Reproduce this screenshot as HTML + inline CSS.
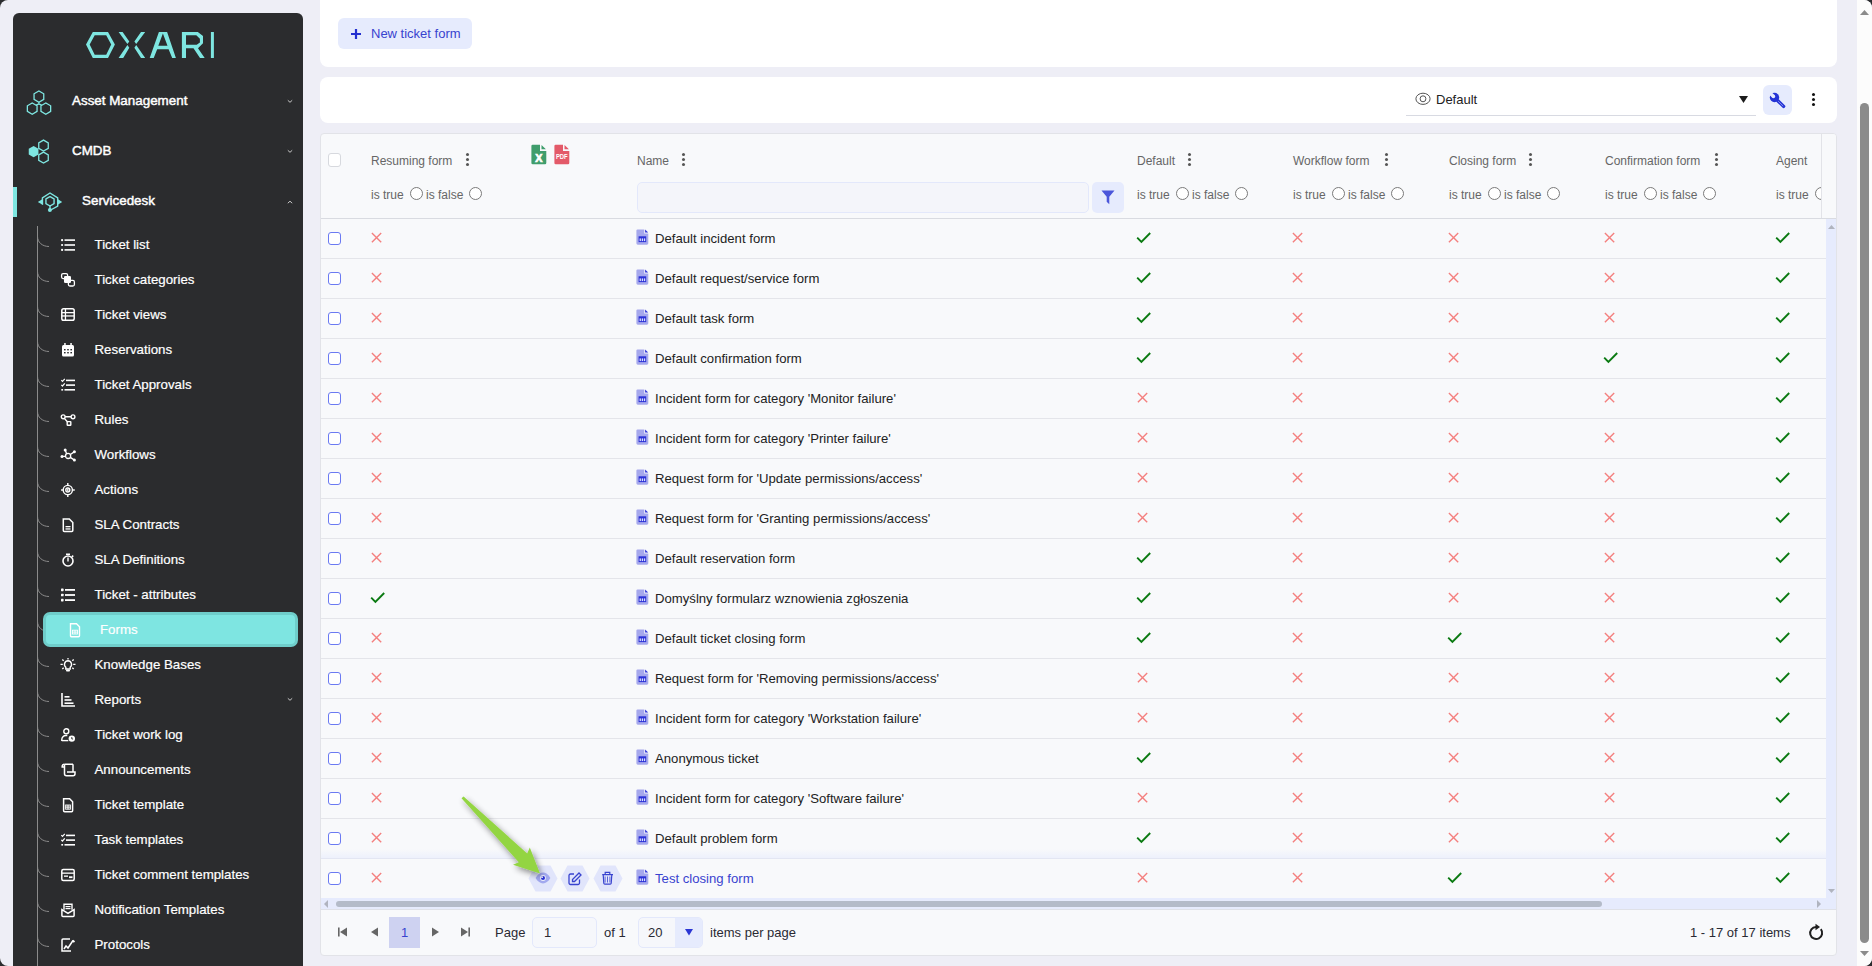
<!DOCTYPE html>
<html><head><meta charset="utf-8"><title>Forms</title>
<style>
*{box-sizing:border-box}
html,body{margin:0;padding:0}
body{width:1872px;height:966px;overflow:hidden;background:#2b2c2e;font-family:"Liberation Sans",sans-serif;position:relative}
#app{position:absolute;left:0;top:0;width:1872px;height:966px;background:#eeeef6;border-radius:8px;overflow:hidden}
.abs{position:absolute}
.ic{position:absolute;display:block;overflow:visible}
.sb{position:absolute;left:13px;top:13px;width:290px;height:970px;background:#2b2c2e;border-radius:6px}
.top{position:absolute;left:0;color:#fff;font-size:13.4px;-webkit-text-stroke:0.45px #fff;white-space:nowrap}
.si{position:absolute;left:81.5px;-webkit-text-stroke:0.2px #fff;color:#fff;font-size:13.3px;white-space:nowrap;line-height:16px}
.card{position:absolute;background:#fff;border-radius:8px}
.hd{position:absolute;color:#666;font-size:12px;white-space:nowrap;line-height:14px}
.cell{position:absolute;color:#222;font-size:13.15px;white-space:nowrap;line-height:16px}
.radio{position:absolute;width:13px;height:13px;border:1px solid #7a7a7a;border-radius:50%;background:#fff}
.kb{position:absolute;width:3px}
.kb i{display:block;width:3px;height:3px;border-radius:50%;background:#555;margin-bottom:2.2px}
.rowl{position:absolute;left:0;width:1505px;height:1px;background:#e4e5ea}
.cb{position:absolute;width:13px;height:13px;border:1.3px solid #6b7af2;border-radius:3px;background:#fff}
.ft{position:absolute;color:#2a2a33;font-size:13px;white-space:nowrap;line-height:16px}
</style></head><body><div id="app">

<div class="sb">
<svg class="ic" style="left:-13px;top:-13px" width="240" height="80" viewBox="0 0 240 80"><g fill="#7ee6e1" fill-rule="evenodd">
<path d="M86 44.6L92.8 32L108 32L114.9 44.6L108 57.9L92.8 57.9Z M89.7 44.6L94.7 35.2L106.2 35.2L111.2 44.6L106.2 54.7L94.7 54.7Z"/>
<path d="M118.6 31.9L122.6 31.9L129.3 41.6L127.4 44Z M127.4 45.1L129.3 47.7L123.2 57.9L118.6 57.9Z M141 31.9L145.2 31.9L136.2 44L134.4 41.6Z M136.2 45.1L145.2 57.9L141 57.9L134.4 47.7Z"/>
<path d="M149.7 57.9L158.9 31.9L167.1 31.9L175.9 57.9L172.2 57.9L168.6 49.3L157.2 49.3L153.7 57.9Z M158.3 45.8L162.9 33.5L167.5 45.8Z"/>
<path d="M181.9 57.9L181.9 31.9L197.8 31.9L203 36L203 43.3L198 48.2L204.7 57.9L200 57.9L193.5 48.2L186 48.2L186 57.9Z M186 35.3L196.3 35.3L199.9 38.8L199.9 42.4L196.7 44.8L186 44.8Z"/>
<path d="M210.9 31.9L213.9 31.9L213.9 57.9L210.9 57.9Z"/>
</g></svg>
<svg class="ic" style="left:12px;top:77px" width="28" height="26" viewBox="0 0 28 26"><g fill="none" stroke="#7ee6e1" stroke-width="1.3"><path d="M18.75 9.40 L13.90 12.20 L9.05 9.40 L9.05 3.80 L13.90 1.00 L18.75 3.80Z"/><path d="M12.05 21.40 L7.20 24.20 L2.35 21.40 L2.35 15.80 L7.20 13.00 L12.05 15.80Z"/><path d="M25.65 21.40 L20.80 24.20 L15.95 21.40 L15.95 15.80 L20.80 13.00 L25.65 15.80Z"/><path d="M13.9 12.2v1.6M10.8 15.4l3.1-1.6 3.1 1.6"/></g></svg>
<svg class="ic" style="left:14px;top:126px" width="26" height="26" viewBox="0 0 26 26"><g fill="none" stroke="#7ee6e1" stroke-width="1.3"><path d="M21.26 9.35 L16.50 12.10 L11.74 9.35 L11.74 3.85 L16.50 1.10 L21.26 3.85Z"/><path d="M21.26 21.35 L16.50 24.10 L11.74 21.35 L11.74 15.85 L16.50 13.10 L21.26 15.85Z"/></g><path fill="#7ee6e1" d="M11.45 15.40 L6.60 18.20 L1.75 15.40 L1.75 9.80 L6.60 7.00 L11.45 9.80Z"/></svg>
<svg class="ic" style="left:24px;top:178px" width="26" height="22" viewBox="0 0 26 22"><g fill="none" stroke="#7ee6e1" stroke-width="1.4" stroke-linejoin="round"><path d="M5.4 13.6V6.8L13 2l7.7 4.8v8.4l-7 3.8"/><path d="M17.07 12.65 L13.00 15.00 L8.93 12.65 L8.93 7.95 L13.00 5.60 L17.07 7.95Z"/><path d="M13 15v3"/></g><path fill="#7ee6e1" d="M0.8 10.9L6.1 7.8v6.2zM25.2 10.9L20.3 7.8v6.2z"/><circle cx="12.9" cy="18.9" r="2" fill="#7ee6e1"/></svg>
<div class="top" style="left:59px;top:80px;line-height:16px">Asset Management</div>
<div class="top" style="left:59px;top:130px;line-height:16px">CMDB</div>
<div class="top" style="left:69px;top:180px;line-height:16px">Servicedesk</div>
<div class="abs" style="left:0;top:174px;width:4px;height:30px;background:#7ee6e1"></div>
<svg class="ic" style="left:274px;top:86px" width="6" height="5" viewBox="0 0 6 5"><path d="M0.8 1.3L3 3.3 5.2 1.3" fill="none" stroke="#c8c8c8" stroke-width="1"/></svg>
<svg class="ic" style="left:274px;top:136px" width="6" height="5" viewBox="0 0 6 5"><path d="M0.8 1.3L3 3.3 5.2 1.3" fill="none" stroke="#c8c8c8" stroke-width="1"/></svg>
<svg class="ic" style="left:274px;top:187px" width="6" height="5" viewBox="0 0 6 5"><path d="M0.8 3.2L3 1.2l2.2 2" fill="none" stroke="#c8c8c8" stroke-width="1"/></svg>
<svg class="ic" style="left:274px;top:684px" width="6" height="5" viewBox="0 0 6 5"><path d="M0.8 1.3L3 3.3 5.2 1.3" fill="none" stroke="#c8c8c8" stroke-width="1"/></svg>
<div class="abs" style="left:24px;top:213px;width:1px;height:760px;background:#8b8b8b"></div>
<svg class="ic" style="left:24px;top:223px" width="14" height="12" viewBox="0 0 14 12"><path d="M0.5 0.5C0.5 6 5 10.5 12 10.5" fill="none" stroke="#8b8b8b" stroke-width="1"/></svg>
<svg class="ic" style="left:48px;top:225px" width="14" height="14" viewBox="0 0 14 14" fill="#fff"><rect x="0" y="1" width="2.2" height="2.2" rx="1"/><rect x="0" y="5.9" width="2.2" height="2.2" rx="1"/><rect x="0" y="10.8" width="2.2" height="2.2" rx="1"/><rect x="3.5" y="1.3" width="10.5" height="1.6"/><rect x="3.5" y="6.2" width="10.5" height="1.6"/><rect x="3.5" y="11.1" width="10.5" height="1.6"/></svg>
<div class="si" style="top:224px">Ticket list</div>
<svg class="ic" style="left:24px;top:258px" width="14" height="12" viewBox="0 0 14 12"><path d="M0.5 0.5C0.5 6 5 10.5 12 10.5" fill="none" stroke="#8b8b8b" stroke-width="1"/></svg>
<svg class="ic" style="left:48px;top:260px" width="14" height="14" viewBox="0 0 14 14" fill="#fff"><rect x="0.6" y="0.6" width="6" height="5" rx="1.5" fill="none" stroke="#fff" stroke-width="1.3"/><rect x="3" y="3" width="7" height="7" rx="1.3"/><rect x="7.4" y="7.4" width="6" height="5.6" rx="1.5" fill="none" stroke="#fff" stroke-width="1.3"/></svg>
<div class="si" style="top:259px">Ticket categories</div>
<svg class="ic" style="left:24px;top:293px" width="14" height="12" viewBox="0 0 14 12"><path d="M0.5 0.5C0.5 6 5 10.5 12 10.5" fill="none" stroke="#8b8b8b" stroke-width="1"/></svg>
<svg class="ic" style="left:48px;top:295px" width="14" height="14" viewBox="0 0 14 14" fill="#fff"><rect x="0.8" y="0.8" width="12.4" height="11.4" rx="1.8" fill="none" stroke="#fff" stroke-width="1.5"/><rect x="1" y="4" width="12" height="1.3"/><rect x="1" y="7.3" width="12" height="1.3"/><rect x="3.8" y="1" width="1.3" height="11"/></svg>
<div class="si" style="top:294px">Ticket views</div>
<svg class="ic" style="left:24px;top:328px" width="14" height="12" viewBox="0 0 14 12"><path d="M0.5 0.5C0.5 6 5 10.5 12 10.5" fill="none" stroke="#8b8b8b" stroke-width="1"/></svg>
<svg class="ic" style="left:48px;top:330px" width="14" height="14" viewBox="0 0 14 14" fill="#fff"><rect x="1" y="2" width="12" height="11.5" rx="1.5"/><rect x="3.2" y="0" width="1.5" height="3"/><rect x="9.3" y="0" width="1.5" height="3"/><g fill="#2b2c2e"><rect x="3" y="6" width="1.6" height="1.4"/><rect x="6.2" y="6" width="1.6" height="1.4"/><rect x="9.4" y="6" width="1.6" height="1.4"/><rect x="3" y="9" width="1.6" height="1.4"/><rect x="6.2" y="9" width="1.6" height="1.4"/><rect x="9.4" y="9" width="1.6" height="1.4"/></g></svg>
<div class="si" style="top:329px">Reservations</div>
<svg class="ic" style="left:24px;top:363px" width="14" height="12" viewBox="0 0 14 12"><path d="M0.5 0.5C0.5 6 5 10.5 12 10.5" fill="none" stroke="#8b8b8b" stroke-width="1"/></svg>
<svg class="ic" style="left:48px;top:365px" width="14" height="14" viewBox="0 0 14 14" fill="#fff"><path d="M0.3 2.2l1.2 1.2 2.3-2.6M0.3 6.8l1.2 1.2 2.3-2.6" fill="none" stroke="#fff" stroke-width="1.2"/><rect x="0.3" y="11" width="1.8" height="1.6"/><rect x="5" y="1.6" width="9" height="1.6"/><rect x="5" y="6.3" width="9" height="1.6"/><rect x="3.5" y="11" width="10.5" height="1.6"/></svg>
<div class="si" style="top:364px">Ticket Approvals</div>
<svg class="ic" style="left:24px;top:398px" width="14" height="12" viewBox="0 0 14 12"><path d="M0.5 0.5C0.5 6 5 10.5 12 10.5" fill="none" stroke="#8b8b8b" stroke-width="1"/></svg>
<svg class="ic" style="left:48px;top:400px" width="14" height="14" viewBox="0 0 14 14" fill="#fff"><g fill="none" stroke="#fff" stroke-width="1.4"><circle cx="2.2" cy="3.8" r="1.9"/><circle cx="12" cy="3.8" r="1.9"/><rect x="6.2" y="8.6" width="3.6" height="3.6" rx="0.5"/><path d="M4.1 3.8h6M3.3 5.4l3.3 3.6"/></g></svg>
<div class="si" style="top:399px">Rules</div>
<svg class="ic" style="left:24px;top:433px" width="14" height="12" viewBox="0 0 14 12"><path d="M0.5 0.5C0.5 6 5 10.5 12 10.5" fill="none" stroke="#8b8b8b" stroke-width="1"/></svg>
<svg class="ic" style="left:48px;top:435px" width="14" height="14" viewBox="0 0 14 14" fill="#fff"><g fill="none" stroke="#fff" stroke-width="1.3"><circle cx="7.1" cy="7.9" r="2.6"/><path d="M1.5 8.3h3M5.6 5.8L4.3 2.2M9.4 6.5l3.8-2.6M9.3 9.4l3.8 2.5"/></g><circle cx="1" cy="8.4" r="1.5"/><circle cx="4.2" cy="1.9" r="1.5"/><circle cx="13.4" cy="3.7" r="1.5"/><circle cx="13.4" cy="12.1" r="1.5"/></svg>
<div class="si" style="top:434px">Workflows</div>
<svg class="ic" style="left:24px;top:468px" width="14" height="12" viewBox="0 0 14 12"><path d="M0.5 0.5C0.5 6 5 10.5 12 10.5" fill="none" stroke="#8b8b8b" stroke-width="1"/></svg>
<svg class="ic" style="left:48px;top:470px" width="14" height="14" viewBox="0 0 14 14" fill="#fff"><g fill="none" stroke="#fff" stroke-width="1.4"><circle cx="6.8" cy="7" r="4.6"/><circle cx="6.8" cy="7" r="2"/></g><circle cx="6.8" cy="7" r="0.9"/><rect x="6.1" y="0" width="1.4" height="2.2"/><rect x="6.1" y="11.8" width="1.4" height="2.2"/><rect x="0" y="6.3" width="2.2" height="1.4"/><rect x="11.6" y="6.3" width="2.2" height="1.4"/></svg>
<div class="si" style="top:469px">Actions</div>
<svg class="ic" style="left:24px;top:503px" width="14" height="12" viewBox="0 0 14 12"><path d="M0.5 0.5C0.5 6 5 10.5 12 10.5" fill="none" stroke="#8b8b8b" stroke-width="1"/></svg>
<svg class="ic" style="left:48px;top:505px" width="14" height="14" viewBox="0 0 14 14" fill="#fff"><path d="M2.3 1h6l3.5 3.5v8a1 1 0 0 1-1 1H3.3a1 1 0 0 1-1-1z" fill="none" stroke="#fff" stroke-width="1.5"/><rect x="4.5" y="8" width="5" height="1.3"/><rect x="4.5" y="10.3" width="5" height="1.3"/></svg>
<div class="si" style="top:504px">SLA Contracts</div>
<svg class="ic" style="left:24px;top:538px" width="14" height="12" viewBox="0 0 14 12"><path d="M0.5 0.5C0.5 6 5 10.5 12 10.5" fill="none" stroke="#8b8b8b" stroke-width="1"/></svg>
<svg class="ic" style="left:48px;top:540px" width="14" height="14" viewBox="0 0 14 14" fill="#fff"><circle cx="7" cy="8" r="5" fill="none" stroke="#fff" stroke-width="1.6"/><rect x="5" y="0.5" width="4" height="1.5"/><rect x="6.3" y="4.5" width="1.4" height="4"/><rect x="10.8" y="2.3" width="1.5" height="2" transform="rotate(45 11.5 3.3)"/></svg>
<div class="si" style="top:539px">SLA Definitions</div>
<svg class="ic" style="left:24px;top:573px" width="14" height="12" viewBox="0 0 14 12"><path d="M0.5 0.5C0.5 6 5 10.5 12 10.5" fill="none" stroke="#8b8b8b" stroke-width="1"/></svg>
<svg class="ic" style="left:48px;top:575px" width="14" height="14" viewBox="0 0 14 14" fill="#fff"><rect x="0" y="0.6" width="2.6" height="2.6" rx="0.6"/><rect x="0" y="5.7" width="2.6" height="2.6" rx="0.6"/><rect x="0" y="10.8" width="2.6" height="2.6" rx="0.6"/><rect x="4" y="1" width="10" height="1.8"/><rect x="4" y="6.1" width="10" height="1.8"/><rect x="4" y="11.2" width="10" height="1.8"/></svg>
<div class="si" style="top:574px">Ticket - attributes</div>
<svg class="ic" style="left:24px;top:608px" width="14" height="12" viewBox="0 0 14 12"><path d="M0.5 0.5C0.5 6 5 10.5 12 10.5" fill="none" stroke="#8b8b8b" stroke-width="1"/></svg>
<div class="abs" style="left:30px;top:599px;width:255px;height:35px;background:#7ee5e1;border:3px solid #6fcdca;border-radius:7px"></div>
<svg class="ic" style="left:55px;top:610px" width="14" height="15" viewBox="0 0 14 15"><path d="M2.5 0.8h6l3 3v9a1 1 0 0 1-1 1H3.5a1 1 0 0 1-1-1z" fill="none" stroke="#fff" stroke-width="1.4"/><g fill="none" stroke="#fff" stroke-width="0.9"><rect x="4.5" y="7.2" width="5" height="3.8"/><path d="M7 7.2v3.8M4.5 9.1h5"/></g></svg>
<div class="si" style="left:87px;top:609px">Forms</div>
<svg class="ic" style="left:24px;top:643px" width="14" height="12" viewBox="0 0 14 12"><path d="M0.5 0.5C0.5 6 5 10.5 12 10.5" fill="none" stroke="#8b8b8b" stroke-width="1"/></svg>
<svg class="ic" style="left:48px;top:645px" width="14" height="14" viewBox="0 0 14 14" fill="#fff"><path d="M7 2.8a3.6 3.6 0 0 0-2.2 6.4v1.8h4.4V9.2A3.6 3.6 0 0 0 7 2.8z" fill="none" stroke="#fff" stroke-width="1.4"/><rect x="5" y="11.6" width="4" height="1.9" rx="0.9"/><g stroke="#fff" stroke-width="1.3"><path d="M7 0v1.5M-0.5 6.3h2.3M12.2 6.3h2.3M1.3 1.5l1.4 1.3M12.7 1.5l-1.4 1.3M1.3 11l1.4-1.3M12.7 11l-1.4-1.3"/></g></svg>
<div class="si" style="top:644px">Knowledge Bases</div>
<svg class="ic" style="left:24px;top:678px" width="14" height="12" viewBox="0 0 14 12"><path d="M0.5 0.5C0.5 6 5 10.5 12 10.5" fill="none" stroke="#8b8b8b" stroke-width="1"/></svg>
<svg class="ic" style="left:48px;top:680px" width="14" height="14" viewBox="0 0 14 14" fill="#fff"><path d="M1 0v13h13" fill="none" stroke="#fff" stroke-width="1.6"/><rect x="3.5" y="3" width="5" height="1.6"/><rect x="3.5" y="6.2" width="7" height="1.6"/><rect x="3.5" y="9.4" width="9" height="1.6"/></svg>
<div class="si" style="top:679px">Reports</div>
<svg class="ic" style="left:24px;top:713px" width="14" height="12" viewBox="0 0 14 12"><path d="M0.5 0.5C0.5 6 5 10.5 12 10.5" fill="none" stroke="#8b8b8b" stroke-width="1"/></svg>
<svg class="ic" style="left:48px;top:715px" width="14" height="14" viewBox="0 0 14 14" fill="#fff"><circle cx="5.3" cy="3.2" r="2.5" fill="none" stroke="#fff" stroke-width="1.4"/><path d="M0.8 13v-1.5a4 4 0 0 1 4-4h1.5" fill="none" stroke="#fff" stroke-width="1.4"/><path d="M0.8 12.6h6.5" stroke="#fff" stroke-width="1.4"/><circle cx="10.8" cy="10.6" r="3.2"/><path d="M10.8 9v2h1.3" stroke="#2b2c2e" stroke-width="0.9" fill="none"/></svg>
<div class="si" style="top:714px">Ticket work log</div>
<svg class="ic" style="left:24px;top:748px" width="14" height="12" viewBox="0 0 14 12"><path d="M0.5 0.5C0.5 6 5 10.5 12 10.5" fill="none" stroke="#8b8b8b" stroke-width="1"/></svg>
<svg class="ic" style="left:48px;top:750px" width="14" height="14" viewBox="0 0 14 14" fill="#fff"><path d="M3.5 1.2h8.5M3.2 1.2a2 2 0 0 0-2 2v0.8h2.3M3.5 1.2v9.6a2 2 0 0 0 2 2h6.5a2 2 0 0 0 2-2V9h-8" fill="none" stroke="#fff" stroke-width="1.5"/><path d="M12 1.2v7.8" stroke="#fff" stroke-width="1.5"/></svg>
<div class="si" style="top:749px">Announcements</div>
<svg class="ic" style="left:24px;top:783px" width="14" height="12" viewBox="0 0 14 12"><path d="M0.5 0.5C0.5 6 5 10.5 12 10.5" fill="none" stroke="#8b8b8b" stroke-width="1"/></svg>
<svg class="ic" style="left:48px;top:785px" width="14" height="14" viewBox="0 0 14 14" fill="#fff"><path d="M2.6 0.8h6l3 3v9a1 1 0 0 1-1 1H3.6a1 1 0 0 1-1-1z" fill="none" stroke="#fff" stroke-width="1.5"/><g fill="none" stroke="#fff" stroke-width="0.9"><rect x="4.6" y="7" width="4.8" height="4.2"/><path d="M6.2 7v4.2M7.8 7v4.2M4.6 9.1h4.8"/></g></svg>
<div class="si" style="top:784px">Ticket template</div>
<svg class="ic" style="left:24px;top:818px" width="14" height="12" viewBox="0 0 14 12"><path d="M0.5 0.5C0.5 6 5 10.5 12 10.5" fill="none" stroke="#8b8b8b" stroke-width="1"/></svg>
<svg class="ic" style="left:48px;top:820px" width="14" height="14" viewBox="0 0 14 14" fill="#fff"><path d="M0.3 2.2l1.2 1.2 2.3-2.6M0.3 6.8l1.2 1.2 2.3-2.6" fill="none" stroke="#fff" stroke-width="1.2"/><rect x="0.3" y="11" width="1.8" height="1.6"/><rect x="5" y="1.6" width="9" height="1.6"/><rect x="5" y="6.3" width="9" height="1.6"/><rect x="3.5" y="11" width="10.5" height="1.6"/></svg>
<div class="si" style="top:819px">Task templates</div>
<svg class="ic" style="left:24px;top:853px" width="14" height="12" viewBox="0 0 14 12"><path d="M0.5 0.5C0.5 6 5 10.5 12 10.5" fill="none" stroke="#8b8b8b" stroke-width="1"/></svg>
<svg class="ic" style="left:48px;top:855px" width="14" height="14" viewBox="0 0 14 14" fill="#fff"><rect x="0.8" y="1.5" width="12.4" height="11" rx="1.5" fill="none" stroke="#fff" stroke-width="1.5"/><rect x="1" y="4.5" width="12" height="1.3"/><rect x="3" y="7.5" width="4" height="1.3"/><rect x="8" y="8.3" width="3.5" height="1.8"/></svg>
<div class="si" style="top:854px">Ticket comment templates</div>
<svg class="ic" style="left:24px;top:888px" width="14" height="12" viewBox="0 0 14 12"><path d="M0.5 0.5C0.5 6 5 10.5 12 10.5" fill="none" stroke="#8b8b8b" stroke-width="1"/></svg>
<svg class="ic" style="left:48px;top:890px" width="14" height="14" viewBox="0 0 14 14" fill="#fff"><path d="M0.9 6.5v6a1 1 0 0 0 1 1h10.2a1 1 0 0 0 1-1v-6l-6.1 3.8z" fill="none" stroke="#fff" stroke-width="1.5"/><path d="M3 6.8V1.2h8v5.6" fill="none" stroke="#fff" stroke-width="1.4"/><rect x="4.5" y="3" width="5" height="1.2"/><rect x="4.5" y="5" width="5" height="1.2"/></svg>
<div class="si" style="top:889px">Notification Templates</div>
<svg class="ic" style="left:24px;top:923px" width="14" height="12" viewBox="0 0 14 12"><path d="M0.5 0.5C0.5 6 5 10.5 12 10.5" fill="none" stroke="#8b8b8b" stroke-width="1"/></svg>
<svg class="ic" style="left:48px;top:925px" width="14" height="14" viewBox="0 0 14 14" fill="#fff"><path d="M9 1H2a1 1 0 0 0-1 1v11h9" fill="none" stroke="#fff" stroke-width="1.5"/><path d="M3 11l2-3 2 2 5-7.5" fill="none" stroke="#fff" stroke-width="1.5"/><path d="M11.5 2.5l2 1.5" stroke="#fff" stroke-width="2"/></svg>
<div class="si" style="top:924px">Protocols</div>
</div>
<div class="card" style="left:320px;top:-10px;width:1517px;height:77px"></div>
<div class="abs" style="left:338px;top:18px;width:134px;height:31px;background:#e6ebfd;border-radius:6px"></div>
<svg class="ic" style="left:351px;top:29px" width="10" height="10" viewBox="0 0 10 10"><path d="M5 0v10M0 5h10" stroke="#2430d0" stroke-width="2.2"/></svg>
<div class="abs" style="left:371px;top:26px;color:#3843cf;font-size:13px;line-height:16px;white-space:nowrap">New ticket form</div>
<div class="card" style="left:320px;top:77px;width:1517px;height:46px"></div>
<svg class="ic" style="left:1415px;top:92px" width="16" height="14" viewBox="0 0 16 14"><ellipse cx="8" cy="6.8" rx="7.1" ry="5.6" fill="none" stroke="#555" stroke-width="1"/><ellipse cx="8" cy="6.8" rx="2.9" ry="3" fill="none" stroke="#555" stroke-width="1"/></svg>
<div class="abs" style="left:1436px;top:92px;color:#222;font-size:13px;line-height:16px">Default</div>
<div class="abs" style="left:1406px;top:115px;width:350px;height:1px;background:#d8dae2"></div>
<svg class="ic" style="left:1739px;top:96px" width="9" height="7" viewBox="0 0 9 7"><path d="M0 0h9L4.5 7z" fill="#1c1c1c"/></svg>
<div class="abs" style="left:1763px;top:85px;width:29px;height:30px;background:#e6ebfd;border-radius:6px"></div>
<svg class="ic" style="left:1762px;top:85px" width="30" height="30" viewBox="0 0 30 30"><defs><mask id="wm"><rect width="30" height="30" fill="#fff"/><circle cx="11.4" cy="11.4" r="1.8" fill="#000"/><path d="M11.4 11.4L6.5 6.5" stroke="#000" stroke-width="3.4"/></mask></defs><circle cx="12.5" cy="12.5" r="4.7" fill="#2433d6" mask="url(#wm)"/><path d="M15.8 15.8l5.8 5.6" stroke="#2433d6" stroke-width="3.4" stroke-linecap="round"/><path d="M16.2 16.2l5 4.9" stroke="#8f98ee" stroke-width="0.9"/></svg>
<div class="kb" style="left:1812px;top:93px"><i style="background:#111"></i><i style="background:#111"></i><i style="background:#111"></i></div>
<div class="abs" style="left:320px;top:133px;width:1517px;height:823px;background:#f8f9fb;border:1px solid #e2e3e8;border-radius:4px;overflow:hidden"><div class="abs" style="left:1500px;top:0;width:1px;height:84px;background:#e2e3e8"></div><div class="abs" style="left:0;top:84px;width:1517px;height:1px;background:#d9dbe1"></div><div class="abs" style="left:7px;top:19px;width:13px;height:14px;border:1px solid #d7d9de;border-radius:3px;background:#fff"></div><div class="hd" style="left:50px;top:20px">Resuming form</div><div class="kb" style="left:145px;top:19px"><i></i><i></i><i></i></div><div class="hd" style="left:50px;top:54px">is true</div><div class="radio" style="left:89px;top:53px"></div><div class="hd" style="left:105px;top:54px">is false</div><div class="radio" style="left:148px;top:53px"></div><div class="hd" style="left:816px;top:20px">Default</div><div class="kb" style="left:867px;top:19px"><i></i><i></i><i></i></div><div class="hd" style="left:816px;top:54px">is true</div><div class="radio" style="left:855px;top:53px"></div><div class="hd" style="left:871px;top:54px">is false</div><div class="radio" style="left:914px;top:53px"></div><div class="hd" style="left:972px;top:20px">Workflow form</div><div class="kb" style="left:1064px;top:19px"><i></i><i></i><i></i></div><div class="hd" style="left:972px;top:54px">is true</div><div class="radio" style="left:1011px;top:53px"></div><div class="hd" style="left:1027px;top:54px">is false</div><div class="radio" style="left:1070px;top:53px"></div><div class="hd" style="left:1128px;top:20px">Closing form</div><div class="kb" style="left:1208px;top:19px"><i></i><i></i><i></i></div><div class="hd" style="left:1128px;top:54px">is true</div><div class="radio" style="left:1167px;top:53px"></div><div class="hd" style="left:1183px;top:54px">is false</div><div class="radio" style="left:1226px;top:53px"></div><div class="hd" style="left:1284px;top:20px">Confirmation form</div><div class="kb" style="left:1394px;top:19px"><i></i><i></i><i></i></div><div class="hd" style="left:1284px;top:54px">is true</div><div class="radio" style="left:1323px;top:53px"></div><div class="hd" style="left:1339px;top:54px">is false</div><div class="radio" style="left:1382px;top:53px"></div><div class="hd" style="left:1455px;top:20px">Agent</div><div class="hd" style="left:1455px;top:54px">is true</div><div class="radio" style="left:1494px;top:53px"></div><div class="abs" style="left:1501px;top:0;width:15px;height:84px;background:#f8f9fb"></div><div class="abs" style="left:1500px;top:0;width:1px;height:84px;background:#e2e3e8"></div><div class="hd" style="left:316px;top:20px">Name</div><div class="kb" style="left:361px;top:19px"><i></i><i></i><i></i></div><div class="abs" style="left:316px;top:48px;width:452px;height:31px;border:1px solid #e3e8fb;border-radius:5px;background:#f4f5fa"></div><div class="abs" style="left:771px;top:48px;width:32px;height:31px;border-radius:5px;background:#e6ebfd"></div><svg class="ic" style="left:780px;top:56px" width="14" height="15" viewBox="0 0 14 15"><path d="M0.5 0.5h13L8.3 6.8v7.5L5.7 11.8V6.8z" fill="#4b56da"/></svg><svg class="ic" style="left:210px;top:10px" width="17" height="22" viewBox="0 0 17 22"><path d="M1.6 0.7H9V6.9H15.3V18.9A1.3 1.3 0 0 1 14 20.2H1.7A1.3 1.3 0 0 1 0.4 18.9V1.9A1.2 1.2 0 0 1 1.6 0.7z" fill="#3f9d6c"/><path d="M10.5 1L14.9 5.3H10.5z" fill="#3f9d6c"/><text x="7.9" y="17.9" text-anchor="middle" font-family="Liberation Sans" font-weight="bold" font-size="10.8" fill="#fff" stroke="#fff" stroke-width="0.7">X</text></svg><svg class="ic" style="left:233px;top:10px" width="17" height="22" viewBox="0 0 17 22"><path d="M1.6 0.7H9V6.9H15.3V18.9A1.3 1.3 0 0 1 14 20.2H1.7A1.3 1.3 0 0 1 0.4 18.9V1.9A1.2 1.2 0 0 1 1.6 0.7z" fill="#e35a69"/><path d="M10.5 1L14.9 5.3H10.5z" fill="#e35a69"/><text x="1.9" y="15" font-family="Liberation Sans" font-weight="bold" font-size="7.6" textLength="11.8" lengthAdjust="spacingAndGlyphs" fill="#fff">PDF</text></svg><div class="rowl" style="top:124px"></div><div class="cb" style="left:7px;top:98px"></div><svg class="ic" style="left:50px;top:98px" width="12" height="12" viewBox="0 0 12 12"><path d="M0.9 0.9l9.3 9.3M10.2 0.9L0.9 10.2" fill="none" stroke="#f4807f" stroke-width="1.4"/></svg><svg class="ic" style="left:815px;top:98px" width="16" height="12" viewBox="0 0 16 12"><path d="M1.2 5.6l4.2 4.2L14.2 1" fill="none" stroke="#0b7a12" stroke-width="1.9"/></svg><svg class="ic" style="left:971px;top:98px" width="12" height="12" viewBox="0 0 12 12"><path d="M0.9 0.9l9.3 9.3M10.2 0.9L0.9 10.2" fill="none" stroke="#f4807f" stroke-width="1.4"/></svg><svg class="ic" style="left:1127px;top:98px" width="12" height="12" viewBox="0 0 12 12"><path d="M0.9 0.9l9.3 9.3M10.2 0.9L0.9 10.2" fill="none" stroke="#f4807f" stroke-width="1.4"/></svg><svg class="ic" style="left:1283px;top:98px" width="12" height="12" viewBox="0 0 12 12"><path d="M0.9 0.9l9.3 9.3M10.2 0.9L0.9 10.2" fill="none" stroke="#f4807f" stroke-width="1.4"/></svg><svg class="ic" style="left:1454px;top:98px" width="16" height="12" viewBox="0 0 16 12"><path d="M1.2 5.6l4.2 4.2L14.2 1" fill="none" stroke="#0b7a12" stroke-width="1.9"/></svg><svg class="ic" style="left:315px;top:95px" width="13" height="16" viewBox="0 0 13 16"><path d="M1.6 0.4H8.3V4.4H12.3V14.3A1.4 1.4 0 0 1 10.9 15.7H1.8A1.4 1.4 0 0 1 0.4 14.3V1.6A1.2 1.2 0 0 1 1.6 0.4z" fill="#a6a8ec"/><path d="M9.1 0.5L12.2 3.6H9.1z" fill="#2a30d8"/><rect x="2.6" y="7.3" width="7.6" height="5.8" fill="#2a30d8"/><g fill="#dfe2fb"><rect x="3.6" y="9.4" width="1.3" height="2.7"/><rect x="5.75" y="9.4" width="1.3" height="2.7"/><rect x="7.9" y="9.4" width="1.3" height="2.7"/></g></svg><div class="cell" style="left:334px;top:97px;color:#222">Default incident form</div><div class="rowl" style="top:164px"></div><div class="cb" style="left:7px;top:138px"></div><svg class="ic" style="left:50px;top:138px" width="12" height="12" viewBox="0 0 12 12"><path d="M0.9 0.9l9.3 9.3M10.2 0.9L0.9 10.2" fill="none" stroke="#f4807f" stroke-width="1.4"/></svg><svg class="ic" style="left:815px;top:138px" width="16" height="12" viewBox="0 0 16 12"><path d="M1.2 5.6l4.2 4.2L14.2 1" fill="none" stroke="#0b7a12" stroke-width="1.9"/></svg><svg class="ic" style="left:971px;top:138px" width="12" height="12" viewBox="0 0 12 12"><path d="M0.9 0.9l9.3 9.3M10.2 0.9L0.9 10.2" fill="none" stroke="#f4807f" stroke-width="1.4"/></svg><svg class="ic" style="left:1127px;top:138px" width="12" height="12" viewBox="0 0 12 12"><path d="M0.9 0.9l9.3 9.3M10.2 0.9L0.9 10.2" fill="none" stroke="#f4807f" stroke-width="1.4"/></svg><svg class="ic" style="left:1283px;top:138px" width="12" height="12" viewBox="0 0 12 12"><path d="M0.9 0.9l9.3 9.3M10.2 0.9L0.9 10.2" fill="none" stroke="#f4807f" stroke-width="1.4"/></svg><svg class="ic" style="left:1454px;top:138px" width="16" height="12" viewBox="0 0 16 12"><path d="M1.2 5.6l4.2 4.2L14.2 1" fill="none" stroke="#0b7a12" stroke-width="1.9"/></svg><svg class="ic" style="left:315px;top:135px" width="13" height="16" viewBox="0 0 13 16"><path d="M1.6 0.4H8.3V4.4H12.3V14.3A1.4 1.4 0 0 1 10.9 15.7H1.8A1.4 1.4 0 0 1 0.4 14.3V1.6A1.2 1.2 0 0 1 1.6 0.4z" fill="#a6a8ec"/><path d="M9.1 0.5L12.2 3.6H9.1z" fill="#2a30d8"/><rect x="2.6" y="7.3" width="7.6" height="5.8" fill="#2a30d8"/><g fill="#dfe2fb"><rect x="3.6" y="9.4" width="1.3" height="2.7"/><rect x="5.75" y="9.4" width="1.3" height="2.7"/><rect x="7.9" y="9.4" width="1.3" height="2.7"/></g></svg><div class="cell" style="left:334px;top:137px;color:#222">Default request/service form</div><div class="rowl" style="top:204px"></div><div class="cb" style="left:7px;top:178px"></div><svg class="ic" style="left:50px;top:178px" width="12" height="12" viewBox="0 0 12 12"><path d="M0.9 0.9l9.3 9.3M10.2 0.9L0.9 10.2" fill="none" stroke="#f4807f" stroke-width="1.4"/></svg><svg class="ic" style="left:815px;top:178px" width="16" height="12" viewBox="0 0 16 12"><path d="M1.2 5.6l4.2 4.2L14.2 1" fill="none" stroke="#0b7a12" stroke-width="1.9"/></svg><svg class="ic" style="left:971px;top:178px" width="12" height="12" viewBox="0 0 12 12"><path d="M0.9 0.9l9.3 9.3M10.2 0.9L0.9 10.2" fill="none" stroke="#f4807f" stroke-width="1.4"/></svg><svg class="ic" style="left:1127px;top:178px" width="12" height="12" viewBox="0 0 12 12"><path d="M0.9 0.9l9.3 9.3M10.2 0.9L0.9 10.2" fill="none" stroke="#f4807f" stroke-width="1.4"/></svg><svg class="ic" style="left:1283px;top:178px" width="12" height="12" viewBox="0 0 12 12"><path d="M0.9 0.9l9.3 9.3M10.2 0.9L0.9 10.2" fill="none" stroke="#f4807f" stroke-width="1.4"/></svg><svg class="ic" style="left:1454px;top:178px" width="16" height="12" viewBox="0 0 16 12"><path d="M1.2 5.6l4.2 4.2L14.2 1" fill="none" stroke="#0b7a12" stroke-width="1.9"/></svg><svg class="ic" style="left:315px;top:175px" width="13" height="16" viewBox="0 0 13 16"><path d="M1.6 0.4H8.3V4.4H12.3V14.3A1.4 1.4 0 0 1 10.9 15.7H1.8A1.4 1.4 0 0 1 0.4 14.3V1.6A1.2 1.2 0 0 1 1.6 0.4z" fill="#a6a8ec"/><path d="M9.1 0.5L12.2 3.6H9.1z" fill="#2a30d8"/><rect x="2.6" y="7.3" width="7.6" height="5.8" fill="#2a30d8"/><g fill="#dfe2fb"><rect x="3.6" y="9.4" width="1.3" height="2.7"/><rect x="5.75" y="9.4" width="1.3" height="2.7"/><rect x="7.9" y="9.4" width="1.3" height="2.7"/></g></svg><div class="cell" style="left:334px;top:177px;color:#222">Default task form</div><div class="rowl" style="top:244px"></div><div class="cb" style="left:7px;top:218px"></div><svg class="ic" style="left:50px;top:218px" width="12" height="12" viewBox="0 0 12 12"><path d="M0.9 0.9l9.3 9.3M10.2 0.9L0.9 10.2" fill="none" stroke="#f4807f" stroke-width="1.4"/></svg><svg class="ic" style="left:815px;top:218px" width="16" height="12" viewBox="0 0 16 12"><path d="M1.2 5.6l4.2 4.2L14.2 1" fill="none" stroke="#0b7a12" stroke-width="1.9"/></svg><svg class="ic" style="left:971px;top:218px" width="12" height="12" viewBox="0 0 12 12"><path d="M0.9 0.9l9.3 9.3M10.2 0.9L0.9 10.2" fill="none" stroke="#f4807f" stroke-width="1.4"/></svg><svg class="ic" style="left:1127px;top:218px" width="12" height="12" viewBox="0 0 12 12"><path d="M0.9 0.9l9.3 9.3M10.2 0.9L0.9 10.2" fill="none" stroke="#f4807f" stroke-width="1.4"/></svg><svg class="ic" style="left:1282px;top:218px" width="16" height="12" viewBox="0 0 16 12"><path d="M1.2 5.6l4.2 4.2L14.2 1" fill="none" stroke="#0b7a12" stroke-width="1.9"/></svg><svg class="ic" style="left:1454px;top:218px" width="16" height="12" viewBox="0 0 16 12"><path d="M1.2 5.6l4.2 4.2L14.2 1" fill="none" stroke="#0b7a12" stroke-width="1.9"/></svg><svg class="ic" style="left:315px;top:215px" width="13" height="16" viewBox="0 0 13 16"><path d="M1.6 0.4H8.3V4.4H12.3V14.3A1.4 1.4 0 0 1 10.9 15.7H1.8A1.4 1.4 0 0 1 0.4 14.3V1.6A1.2 1.2 0 0 1 1.6 0.4z" fill="#a6a8ec"/><path d="M9.1 0.5L12.2 3.6H9.1z" fill="#2a30d8"/><rect x="2.6" y="7.3" width="7.6" height="5.8" fill="#2a30d8"/><g fill="#dfe2fb"><rect x="3.6" y="9.4" width="1.3" height="2.7"/><rect x="5.75" y="9.4" width="1.3" height="2.7"/><rect x="7.9" y="9.4" width="1.3" height="2.7"/></g></svg><div class="cell" style="left:334px;top:217px;color:#222">Default confirmation form</div><div class="rowl" style="top:284px"></div><div class="cb" style="left:7px;top:258px"></div><svg class="ic" style="left:50px;top:258px" width="12" height="12" viewBox="0 0 12 12"><path d="M0.9 0.9l9.3 9.3M10.2 0.9L0.9 10.2" fill="none" stroke="#f4807f" stroke-width="1.4"/></svg><svg class="ic" style="left:816px;top:258px" width="12" height="12" viewBox="0 0 12 12"><path d="M0.9 0.9l9.3 9.3M10.2 0.9L0.9 10.2" fill="none" stroke="#f4807f" stroke-width="1.4"/></svg><svg class="ic" style="left:971px;top:258px" width="12" height="12" viewBox="0 0 12 12"><path d="M0.9 0.9l9.3 9.3M10.2 0.9L0.9 10.2" fill="none" stroke="#f4807f" stroke-width="1.4"/></svg><svg class="ic" style="left:1127px;top:258px" width="12" height="12" viewBox="0 0 12 12"><path d="M0.9 0.9l9.3 9.3M10.2 0.9L0.9 10.2" fill="none" stroke="#f4807f" stroke-width="1.4"/></svg><svg class="ic" style="left:1283px;top:258px" width="12" height="12" viewBox="0 0 12 12"><path d="M0.9 0.9l9.3 9.3M10.2 0.9L0.9 10.2" fill="none" stroke="#f4807f" stroke-width="1.4"/></svg><svg class="ic" style="left:1454px;top:258px" width="16" height="12" viewBox="0 0 16 12"><path d="M1.2 5.6l4.2 4.2L14.2 1" fill="none" stroke="#0b7a12" stroke-width="1.9"/></svg><svg class="ic" style="left:315px;top:255px" width="13" height="16" viewBox="0 0 13 16"><path d="M1.6 0.4H8.3V4.4H12.3V14.3A1.4 1.4 0 0 1 10.9 15.7H1.8A1.4 1.4 0 0 1 0.4 14.3V1.6A1.2 1.2 0 0 1 1.6 0.4z" fill="#a6a8ec"/><path d="M9.1 0.5L12.2 3.6H9.1z" fill="#2a30d8"/><rect x="2.6" y="7.3" width="7.6" height="5.8" fill="#2a30d8"/><g fill="#dfe2fb"><rect x="3.6" y="9.4" width="1.3" height="2.7"/><rect x="5.75" y="9.4" width="1.3" height="2.7"/><rect x="7.9" y="9.4" width="1.3" height="2.7"/></g></svg><div class="cell" style="left:334px;top:257px;color:#222">Incident form for category 'Monitor failure'</div><div class="rowl" style="top:324px"></div><div class="cb" style="left:7px;top:298px"></div><svg class="ic" style="left:50px;top:298px" width="12" height="12" viewBox="0 0 12 12"><path d="M0.9 0.9l9.3 9.3M10.2 0.9L0.9 10.2" fill="none" stroke="#f4807f" stroke-width="1.4"/></svg><svg class="ic" style="left:816px;top:298px" width="12" height="12" viewBox="0 0 12 12"><path d="M0.9 0.9l9.3 9.3M10.2 0.9L0.9 10.2" fill="none" stroke="#f4807f" stroke-width="1.4"/></svg><svg class="ic" style="left:971px;top:298px" width="12" height="12" viewBox="0 0 12 12"><path d="M0.9 0.9l9.3 9.3M10.2 0.9L0.9 10.2" fill="none" stroke="#f4807f" stroke-width="1.4"/></svg><svg class="ic" style="left:1127px;top:298px" width="12" height="12" viewBox="0 0 12 12"><path d="M0.9 0.9l9.3 9.3M10.2 0.9L0.9 10.2" fill="none" stroke="#f4807f" stroke-width="1.4"/></svg><svg class="ic" style="left:1283px;top:298px" width="12" height="12" viewBox="0 0 12 12"><path d="M0.9 0.9l9.3 9.3M10.2 0.9L0.9 10.2" fill="none" stroke="#f4807f" stroke-width="1.4"/></svg><svg class="ic" style="left:1454px;top:298px" width="16" height="12" viewBox="0 0 16 12"><path d="M1.2 5.6l4.2 4.2L14.2 1" fill="none" stroke="#0b7a12" stroke-width="1.9"/></svg><svg class="ic" style="left:315px;top:295px" width="13" height="16" viewBox="0 0 13 16"><path d="M1.6 0.4H8.3V4.4H12.3V14.3A1.4 1.4 0 0 1 10.9 15.7H1.8A1.4 1.4 0 0 1 0.4 14.3V1.6A1.2 1.2 0 0 1 1.6 0.4z" fill="#a6a8ec"/><path d="M9.1 0.5L12.2 3.6H9.1z" fill="#2a30d8"/><rect x="2.6" y="7.3" width="7.6" height="5.8" fill="#2a30d8"/><g fill="#dfe2fb"><rect x="3.6" y="9.4" width="1.3" height="2.7"/><rect x="5.75" y="9.4" width="1.3" height="2.7"/><rect x="7.9" y="9.4" width="1.3" height="2.7"/></g></svg><div class="cell" style="left:334px;top:297px;color:#222">Incident form for category 'Printer failure'</div><div class="rowl" style="top:364px"></div><div class="cb" style="left:7px;top:338px"></div><svg class="ic" style="left:50px;top:338px" width="12" height="12" viewBox="0 0 12 12"><path d="M0.9 0.9l9.3 9.3M10.2 0.9L0.9 10.2" fill="none" stroke="#f4807f" stroke-width="1.4"/></svg><svg class="ic" style="left:816px;top:338px" width="12" height="12" viewBox="0 0 12 12"><path d="M0.9 0.9l9.3 9.3M10.2 0.9L0.9 10.2" fill="none" stroke="#f4807f" stroke-width="1.4"/></svg><svg class="ic" style="left:971px;top:338px" width="12" height="12" viewBox="0 0 12 12"><path d="M0.9 0.9l9.3 9.3M10.2 0.9L0.9 10.2" fill="none" stroke="#f4807f" stroke-width="1.4"/></svg><svg class="ic" style="left:1127px;top:338px" width="12" height="12" viewBox="0 0 12 12"><path d="M0.9 0.9l9.3 9.3M10.2 0.9L0.9 10.2" fill="none" stroke="#f4807f" stroke-width="1.4"/></svg><svg class="ic" style="left:1283px;top:338px" width="12" height="12" viewBox="0 0 12 12"><path d="M0.9 0.9l9.3 9.3M10.2 0.9L0.9 10.2" fill="none" stroke="#f4807f" stroke-width="1.4"/></svg><svg class="ic" style="left:1454px;top:338px" width="16" height="12" viewBox="0 0 16 12"><path d="M1.2 5.6l4.2 4.2L14.2 1" fill="none" stroke="#0b7a12" stroke-width="1.9"/></svg><svg class="ic" style="left:315px;top:335px" width="13" height="16" viewBox="0 0 13 16"><path d="M1.6 0.4H8.3V4.4H12.3V14.3A1.4 1.4 0 0 1 10.9 15.7H1.8A1.4 1.4 0 0 1 0.4 14.3V1.6A1.2 1.2 0 0 1 1.6 0.4z" fill="#a6a8ec"/><path d="M9.1 0.5L12.2 3.6H9.1z" fill="#2a30d8"/><rect x="2.6" y="7.3" width="7.6" height="5.8" fill="#2a30d8"/><g fill="#dfe2fb"><rect x="3.6" y="9.4" width="1.3" height="2.7"/><rect x="5.75" y="9.4" width="1.3" height="2.7"/><rect x="7.9" y="9.4" width="1.3" height="2.7"/></g></svg><div class="cell" style="left:334px;top:337px;color:#222">Request form for 'Update permissions/access'</div><div class="rowl" style="top:404px"></div><div class="cb" style="left:7px;top:378px"></div><svg class="ic" style="left:50px;top:378px" width="12" height="12" viewBox="0 0 12 12"><path d="M0.9 0.9l9.3 9.3M10.2 0.9L0.9 10.2" fill="none" stroke="#f4807f" stroke-width="1.4"/></svg><svg class="ic" style="left:816px;top:378px" width="12" height="12" viewBox="0 0 12 12"><path d="M0.9 0.9l9.3 9.3M10.2 0.9L0.9 10.2" fill="none" stroke="#f4807f" stroke-width="1.4"/></svg><svg class="ic" style="left:971px;top:378px" width="12" height="12" viewBox="0 0 12 12"><path d="M0.9 0.9l9.3 9.3M10.2 0.9L0.9 10.2" fill="none" stroke="#f4807f" stroke-width="1.4"/></svg><svg class="ic" style="left:1127px;top:378px" width="12" height="12" viewBox="0 0 12 12"><path d="M0.9 0.9l9.3 9.3M10.2 0.9L0.9 10.2" fill="none" stroke="#f4807f" stroke-width="1.4"/></svg><svg class="ic" style="left:1283px;top:378px" width="12" height="12" viewBox="0 0 12 12"><path d="M0.9 0.9l9.3 9.3M10.2 0.9L0.9 10.2" fill="none" stroke="#f4807f" stroke-width="1.4"/></svg><svg class="ic" style="left:1454px;top:378px" width="16" height="12" viewBox="0 0 16 12"><path d="M1.2 5.6l4.2 4.2L14.2 1" fill="none" stroke="#0b7a12" stroke-width="1.9"/></svg><svg class="ic" style="left:315px;top:375px" width="13" height="16" viewBox="0 0 13 16"><path d="M1.6 0.4H8.3V4.4H12.3V14.3A1.4 1.4 0 0 1 10.9 15.7H1.8A1.4 1.4 0 0 1 0.4 14.3V1.6A1.2 1.2 0 0 1 1.6 0.4z" fill="#a6a8ec"/><path d="M9.1 0.5L12.2 3.6H9.1z" fill="#2a30d8"/><rect x="2.6" y="7.3" width="7.6" height="5.8" fill="#2a30d8"/><g fill="#dfe2fb"><rect x="3.6" y="9.4" width="1.3" height="2.7"/><rect x="5.75" y="9.4" width="1.3" height="2.7"/><rect x="7.9" y="9.4" width="1.3" height="2.7"/></g></svg><div class="cell" style="left:334px;top:377px;color:#222">Request form for 'Granting permissions/access'</div><div class="rowl" style="top:444px"></div><div class="cb" style="left:7px;top:418px"></div><svg class="ic" style="left:50px;top:418px" width="12" height="12" viewBox="0 0 12 12"><path d="M0.9 0.9l9.3 9.3M10.2 0.9L0.9 10.2" fill="none" stroke="#f4807f" stroke-width="1.4"/></svg><svg class="ic" style="left:815px;top:418px" width="16" height="12" viewBox="0 0 16 12"><path d="M1.2 5.6l4.2 4.2L14.2 1" fill="none" stroke="#0b7a12" stroke-width="1.9"/></svg><svg class="ic" style="left:971px;top:418px" width="12" height="12" viewBox="0 0 12 12"><path d="M0.9 0.9l9.3 9.3M10.2 0.9L0.9 10.2" fill="none" stroke="#f4807f" stroke-width="1.4"/></svg><svg class="ic" style="left:1127px;top:418px" width="12" height="12" viewBox="0 0 12 12"><path d="M0.9 0.9l9.3 9.3M10.2 0.9L0.9 10.2" fill="none" stroke="#f4807f" stroke-width="1.4"/></svg><svg class="ic" style="left:1283px;top:418px" width="12" height="12" viewBox="0 0 12 12"><path d="M0.9 0.9l9.3 9.3M10.2 0.9L0.9 10.2" fill="none" stroke="#f4807f" stroke-width="1.4"/></svg><svg class="ic" style="left:1454px;top:418px" width="16" height="12" viewBox="0 0 16 12"><path d="M1.2 5.6l4.2 4.2L14.2 1" fill="none" stroke="#0b7a12" stroke-width="1.9"/></svg><svg class="ic" style="left:315px;top:415px" width="13" height="16" viewBox="0 0 13 16"><path d="M1.6 0.4H8.3V4.4H12.3V14.3A1.4 1.4 0 0 1 10.9 15.7H1.8A1.4 1.4 0 0 1 0.4 14.3V1.6A1.2 1.2 0 0 1 1.6 0.4z" fill="#a6a8ec"/><path d="M9.1 0.5L12.2 3.6H9.1z" fill="#2a30d8"/><rect x="2.6" y="7.3" width="7.6" height="5.8" fill="#2a30d8"/><g fill="#dfe2fb"><rect x="3.6" y="9.4" width="1.3" height="2.7"/><rect x="5.75" y="9.4" width="1.3" height="2.7"/><rect x="7.9" y="9.4" width="1.3" height="2.7"/></g></svg><div class="cell" style="left:334px;top:417px;color:#222">Default reservation form</div><div class="rowl" style="top:484px"></div><div class="cb" style="left:7px;top:458px"></div><svg class="ic" style="left:49px;top:458px" width="16" height="12" viewBox="0 0 16 12"><path d="M1.2 5.6l4.2 4.2L14.2 1" fill="none" stroke="#0b7a12" stroke-width="1.9"/></svg><svg class="ic" style="left:815px;top:458px" width="16" height="12" viewBox="0 0 16 12"><path d="M1.2 5.6l4.2 4.2L14.2 1" fill="none" stroke="#0b7a12" stroke-width="1.9"/></svg><svg class="ic" style="left:971px;top:458px" width="12" height="12" viewBox="0 0 12 12"><path d="M0.9 0.9l9.3 9.3M10.2 0.9L0.9 10.2" fill="none" stroke="#f4807f" stroke-width="1.4"/></svg><svg class="ic" style="left:1127px;top:458px" width="12" height="12" viewBox="0 0 12 12"><path d="M0.9 0.9l9.3 9.3M10.2 0.9L0.9 10.2" fill="none" stroke="#f4807f" stroke-width="1.4"/></svg><svg class="ic" style="left:1283px;top:458px" width="12" height="12" viewBox="0 0 12 12"><path d="M0.9 0.9l9.3 9.3M10.2 0.9L0.9 10.2" fill="none" stroke="#f4807f" stroke-width="1.4"/></svg><svg class="ic" style="left:1454px;top:458px" width="16" height="12" viewBox="0 0 16 12"><path d="M1.2 5.6l4.2 4.2L14.2 1" fill="none" stroke="#0b7a12" stroke-width="1.9"/></svg><svg class="ic" style="left:315px;top:455px" width="13" height="16" viewBox="0 0 13 16"><path d="M1.6 0.4H8.3V4.4H12.3V14.3A1.4 1.4 0 0 1 10.9 15.7H1.8A1.4 1.4 0 0 1 0.4 14.3V1.6A1.2 1.2 0 0 1 1.6 0.4z" fill="#a6a8ec"/><path d="M9.1 0.5L12.2 3.6H9.1z" fill="#2a30d8"/><rect x="2.6" y="7.3" width="7.6" height="5.8" fill="#2a30d8"/><g fill="#dfe2fb"><rect x="3.6" y="9.4" width="1.3" height="2.7"/><rect x="5.75" y="9.4" width="1.3" height="2.7"/><rect x="7.9" y="9.4" width="1.3" height="2.7"/></g></svg><div class="cell" style="left:334px;top:457px;color:#222">Domyślny formularz wznowienia zgłoszenia</div><div class="rowl" style="top:524px"></div><div class="cb" style="left:7px;top:498px"></div><svg class="ic" style="left:50px;top:498px" width="12" height="12" viewBox="0 0 12 12"><path d="M0.9 0.9l9.3 9.3M10.2 0.9L0.9 10.2" fill="none" stroke="#f4807f" stroke-width="1.4"/></svg><svg class="ic" style="left:815px;top:498px" width="16" height="12" viewBox="0 0 16 12"><path d="M1.2 5.6l4.2 4.2L14.2 1" fill="none" stroke="#0b7a12" stroke-width="1.9"/></svg><svg class="ic" style="left:971px;top:498px" width="12" height="12" viewBox="0 0 12 12"><path d="M0.9 0.9l9.3 9.3M10.2 0.9L0.9 10.2" fill="none" stroke="#f4807f" stroke-width="1.4"/></svg><svg class="ic" style="left:1126px;top:498px" width="16" height="12" viewBox="0 0 16 12"><path d="M1.2 5.6l4.2 4.2L14.2 1" fill="none" stroke="#0b7a12" stroke-width="1.9"/></svg><svg class="ic" style="left:1283px;top:498px" width="12" height="12" viewBox="0 0 12 12"><path d="M0.9 0.9l9.3 9.3M10.2 0.9L0.9 10.2" fill="none" stroke="#f4807f" stroke-width="1.4"/></svg><svg class="ic" style="left:1454px;top:498px" width="16" height="12" viewBox="0 0 16 12"><path d="M1.2 5.6l4.2 4.2L14.2 1" fill="none" stroke="#0b7a12" stroke-width="1.9"/></svg><svg class="ic" style="left:315px;top:495px" width="13" height="16" viewBox="0 0 13 16"><path d="M1.6 0.4H8.3V4.4H12.3V14.3A1.4 1.4 0 0 1 10.9 15.7H1.8A1.4 1.4 0 0 1 0.4 14.3V1.6A1.2 1.2 0 0 1 1.6 0.4z" fill="#a6a8ec"/><path d="M9.1 0.5L12.2 3.6H9.1z" fill="#2a30d8"/><rect x="2.6" y="7.3" width="7.6" height="5.8" fill="#2a30d8"/><g fill="#dfe2fb"><rect x="3.6" y="9.4" width="1.3" height="2.7"/><rect x="5.75" y="9.4" width="1.3" height="2.7"/><rect x="7.9" y="9.4" width="1.3" height="2.7"/></g></svg><div class="cell" style="left:334px;top:497px;color:#222">Default ticket closing form</div><div class="rowl" style="top:564px"></div><div class="cb" style="left:7px;top:538px"></div><svg class="ic" style="left:50px;top:538px" width="12" height="12" viewBox="0 0 12 12"><path d="M0.9 0.9l9.3 9.3M10.2 0.9L0.9 10.2" fill="none" stroke="#f4807f" stroke-width="1.4"/></svg><svg class="ic" style="left:816px;top:538px" width="12" height="12" viewBox="0 0 12 12"><path d="M0.9 0.9l9.3 9.3M10.2 0.9L0.9 10.2" fill="none" stroke="#f4807f" stroke-width="1.4"/></svg><svg class="ic" style="left:971px;top:538px" width="12" height="12" viewBox="0 0 12 12"><path d="M0.9 0.9l9.3 9.3M10.2 0.9L0.9 10.2" fill="none" stroke="#f4807f" stroke-width="1.4"/></svg><svg class="ic" style="left:1127px;top:538px" width="12" height="12" viewBox="0 0 12 12"><path d="M0.9 0.9l9.3 9.3M10.2 0.9L0.9 10.2" fill="none" stroke="#f4807f" stroke-width="1.4"/></svg><svg class="ic" style="left:1283px;top:538px" width="12" height="12" viewBox="0 0 12 12"><path d="M0.9 0.9l9.3 9.3M10.2 0.9L0.9 10.2" fill="none" stroke="#f4807f" stroke-width="1.4"/></svg><svg class="ic" style="left:1454px;top:538px" width="16" height="12" viewBox="0 0 16 12"><path d="M1.2 5.6l4.2 4.2L14.2 1" fill="none" stroke="#0b7a12" stroke-width="1.9"/></svg><svg class="ic" style="left:315px;top:535px" width="13" height="16" viewBox="0 0 13 16"><path d="M1.6 0.4H8.3V4.4H12.3V14.3A1.4 1.4 0 0 1 10.9 15.7H1.8A1.4 1.4 0 0 1 0.4 14.3V1.6A1.2 1.2 0 0 1 1.6 0.4z" fill="#a6a8ec"/><path d="M9.1 0.5L12.2 3.6H9.1z" fill="#2a30d8"/><rect x="2.6" y="7.3" width="7.6" height="5.8" fill="#2a30d8"/><g fill="#dfe2fb"><rect x="3.6" y="9.4" width="1.3" height="2.7"/><rect x="5.75" y="9.4" width="1.3" height="2.7"/><rect x="7.9" y="9.4" width="1.3" height="2.7"/></g></svg><div class="cell" style="left:334px;top:537px;color:#222">Request form for 'Removing permissions/access'</div><div class="rowl" style="top:604px"></div><div class="cb" style="left:7px;top:578px"></div><svg class="ic" style="left:50px;top:578px" width="12" height="12" viewBox="0 0 12 12"><path d="M0.9 0.9l9.3 9.3M10.2 0.9L0.9 10.2" fill="none" stroke="#f4807f" stroke-width="1.4"/></svg><svg class="ic" style="left:816px;top:578px" width="12" height="12" viewBox="0 0 12 12"><path d="M0.9 0.9l9.3 9.3M10.2 0.9L0.9 10.2" fill="none" stroke="#f4807f" stroke-width="1.4"/></svg><svg class="ic" style="left:971px;top:578px" width="12" height="12" viewBox="0 0 12 12"><path d="M0.9 0.9l9.3 9.3M10.2 0.9L0.9 10.2" fill="none" stroke="#f4807f" stroke-width="1.4"/></svg><svg class="ic" style="left:1127px;top:578px" width="12" height="12" viewBox="0 0 12 12"><path d="M0.9 0.9l9.3 9.3M10.2 0.9L0.9 10.2" fill="none" stroke="#f4807f" stroke-width="1.4"/></svg><svg class="ic" style="left:1283px;top:578px" width="12" height="12" viewBox="0 0 12 12"><path d="M0.9 0.9l9.3 9.3M10.2 0.9L0.9 10.2" fill="none" stroke="#f4807f" stroke-width="1.4"/></svg><svg class="ic" style="left:1454px;top:578px" width="16" height="12" viewBox="0 0 16 12"><path d="M1.2 5.6l4.2 4.2L14.2 1" fill="none" stroke="#0b7a12" stroke-width="1.9"/></svg><svg class="ic" style="left:315px;top:575px" width="13" height="16" viewBox="0 0 13 16"><path d="M1.6 0.4H8.3V4.4H12.3V14.3A1.4 1.4 0 0 1 10.9 15.7H1.8A1.4 1.4 0 0 1 0.4 14.3V1.6A1.2 1.2 0 0 1 1.6 0.4z" fill="#a6a8ec"/><path d="M9.1 0.5L12.2 3.6H9.1z" fill="#2a30d8"/><rect x="2.6" y="7.3" width="7.6" height="5.8" fill="#2a30d8"/><g fill="#dfe2fb"><rect x="3.6" y="9.4" width="1.3" height="2.7"/><rect x="5.75" y="9.4" width="1.3" height="2.7"/><rect x="7.9" y="9.4" width="1.3" height="2.7"/></g></svg><div class="cell" style="left:334px;top:577px;color:#222">Incident form for category 'Workstation failure'</div><div class="rowl" style="top:644px"></div><div class="cb" style="left:7px;top:618px"></div><svg class="ic" style="left:50px;top:618px" width="12" height="12" viewBox="0 0 12 12"><path d="M0.9 0.9l9.3 9.3M10.2 0.9L0.9 10.2" fill="none" stroke="#f4807f" stroke-width="1.4"/></svg><svg class="ic" style="left:815px;top:618px" width="16" height="12" viewBox="0 0 16 12"><path d="M1.2 5.6l4.2 4.2L14.2 1" fill="none" stroke="#0b7a12" stroke-width="1.9"/></svg><svg class="ic" style="left:971px;top:618px" width="12" height="12" viewBox="0 0 12 12"><path d="M0.9 0.9l9.3 9.3M10.2 0.9L0.9 10.2" fill="none" stroke="#f4807f" stroke-width="1.4"/></svg><svg class="ic" style="left:1127px;top:618px" width="12" height="12" viewBox="0 0 12 12"><path d="M0.9 0.9l9.3 9.3M10.2 0.9L0.9 10.2" fill="none" stroke="#f4807f" stroke-width="1.4"/></svg><svg class="ic" style="left:1283px;top:618px" width="12" height="12" viewBox="0 0 12 12"><path d="M0.9 0.9l9.3 9.3M10.2 0.9L0.9 10.2" fill="none" stroke="#f4807f" stroke-width="1.4"/></svg><svg class="ic" style="left:1454px;top:618px" width="16" height="12" viewBox="0 0 16 12"><path d="M1.2 5.6l4.2 4.2L14.2 1" fill="none" stroke="#0b7a12" stroke-width="1.9"/></svg><svg class="ic" style="left:315px;top:615px" width="13" height="16" viewBox="0 0 13 16"><path d="M1.6 0.4H8.3V4.4H12.3V14.3A1.4 1.4 0 0 1 10.9 15.7H1.8A1.4 1.4 0 0 1 0.4 14.3V1.6A1.2 1.2 0 0 1 1.6 0.4z" fill="#a6a8ec"/><path d="M9.1 0.5L12.2 3.6H9.1z" fill="#2a30d8"/><rect x="2.6" y="7.3" width="7.6" height="5.8" fill="#2a30d8"/><g fill="#dfe2fb"><rect x="3.6" y="9.4" width="1.3" height="2.7"/><rect x="5.75" y="9.4" width="1.3" height="2.7"/><rect x="7.9" y="9.4" width="1.3" height="2.7"/></g></svg><div class="cell" style="left:334px;top:617px;color:#222">Anonymous ticket</div><div class="rowl" style="top:684px"></div><div class="cb" style="left:7px;top:658px"></div><svg class="ic" style="left:50px;top:658px" width="12" height="12" viewBox="0 0 12 12"><path d="M0.9 0.9l9.3 9.3M10.2 0.9L0.9 10.2" fill="none" stroke="#f4807f" stroke-width="1.4"/></svg><svg class="ic" style="left:816px;top:658px" width="12" height="12" viewBox="0 0 12 12"><path d="M0.9 0.9l9.3 9.3M10.2 0.9L0.9 10.2" fill="none" stroke="#f4807f" stroke-width="1.4"/></svg><svg class="ic" style="left:971px;top:658px" width="12" height="12" viewBox="0 0 12 12"><path d="M0.9 0.9l9.3 9.3M10.2 0.9L0.9 10.2" fill="none" stroke="#f4807f" stroke-width="1.4"/></svg><svg class="ic" style="left:1127px;top:658px" width="12" height="12" viewBox="0 0 12 12"><path d="M0.9 0.9l9.3 9.3M10.2 0.9L0.9 10.2" fill="none" stroke="#f4807f" stroke-width="1.4"/></svg><svg class="ic" style="left:1283px;top:658px" width="12" height="12" viewBox="0 0 12 12"><path d="M0.9 0.9l9.3 9.3M10.2 0.9L0.9 10.2" fill="none" stroke="#f4807f" stroke-width="1.4"/></svg><svg class="ic" style="left:1454px;top:658px" width="16" height="12" viewBox="0 0 16 12"><path d="M1.2 5.6l4.2 4.2L14.2 1" fill="none" stroke="#0b7a12" stroke-width="1.9"/></svg><svg class="ic" style="left:315px;top:655px" width="13" height="16" viewBox="0 0 13 16"><path d="M1.6 0.4H8.3V4.4H12.3V14.3A1.4 1.4 0 0 1 10.9 15.7H1.8A1.4 1.4 0 0 1 0.4 14.3V1.6A1.2 1.2 0 0 1 1.6 0.4z" fill="#a6a8ec"/><path d="M9.1 0.5L12.2 3.6H9.1z" fill="#2a30d8"/><rect x="2.6" y="7.3" width="7.6" height="5.8" fill="#2a30d8"/><g fill="#dfe2fb"><rect x="3.6" y="9.4" width="1.3" height="2.7"/><rect x="5.75" y="9.4" width="1.3" height="2.7"/><rect x="7.9" y="9.4" width="1.3" height="2.7"/></g></svg><div class="cell" style="left:334px;top:657px;color:#222">Incident form for category 'Software failure'</div><div class="rowl" style="top:724px"></div><div class="cb" style="left:7px;top:698px"></div><svg class="ic" style="left:50px;top:698px" width="12" height="12" viewBox="0 0 12 12"><path d="M0.9 0.9l9.3 9.3M10.2 0.9L0.9 10.2" fill="none" stroke="#f4807f" stroke-width="1.4"/></svg><svg class="ic" style="left:815px;top:698px" width="16" height="12" viewBox="0 0 16 12"><path d="M1.2 5.6l4.2 4.2L14.2 1" fill="none" stroke="#0b7a12" stroke-width="1.9"/></svg><svg class="ic" style="left:971px;top:698px" width="12" height="12" viewBox="0 0 12 12"><path d="M0.9 0.9l9.3 9.3M10.2 0.9L0.9 10.2" fill="none" stroke="#f4807f" stroke-width="1.4"/></svg><svg class="ic" style="left:1127px;top:698px" width="12" height="12" viewBox="0 0 12 12"><path d="M0.9 0.9l9.3 9.3M10.2 0.9L0.9 10.2" fill="none" stroke="#f4807f" stroke-width="1.4"/></svg><svg class="ic" style="left:1283px;top:698px" width="12" height="12" viewBox="0 0 12 12"><path d="M0.9 0.9l9.3 9.3M10.2 0.9L0.9 10.2" fill="none" stroke="#f4807f" stroke-width="1.4"/></svg><svg class="ic" style="left:1454px;top:698px" width="16" height="12" viewBox="0 0 16 12"><path d="M1.2 5.6l4.2 4.2L14.2 1" fill="none" stroke="#0b7a12" stroke-width="1.9"/></svg><svg class="ic" style="left:315px;top:695px" width="13" height="16" viewBox="0 0 13 16"><path d="M1.6 0.4H8.3V4.4H12.3V14.3A1.4 1.4 0 0 1 10.9 15.7H1.8A1.4 1.4 0 0 1 0.4 14.3V1.6A1.2 1.2 0 0 1 1.6 0.4z" fill="#a6a8ec"/><path d="M9.1 0.5L12.2 3.6H9.1z" fill="#2a30d8"/><rect x="2.6" y="7.3" width="7.6" height="5.8" fill="#2a30d8"/><g fill="#dfe2fb"><rect x="3.6" y="9.4" width="1.3" height="2.7"/><rect x="5.75" y="9.4" width="1.3" height="2.7"/><rect x="7.9" y="9.4" width="1.3" height="2.7"/></g></svg><div class="cell" style="left:334px;top:697px;color:#222">Default problem form</div><div class="cb" style="left:7px;top:738px"></div><svg class="ic" style="left:50px;top:738px" width="12" height="12" viewBox="0 0 12 12"><path d="M0.9 0.9l9.3 9.3M10.2 0.9L0.9 10.2" fill="none" stroke="#f4807f" stroke-width="1.4"/></svg><svg class="ic" style="left:816px;top:738px" width="12" height="12" viewBox="0 0 12 12"><path d="M0.9 0.9l9.3 9.3M10.2 0.9L0.9 10.2" fill="none" stroke="#f4807f" stroke-width="1.4"/></svg><svg class="ic" style="left:971px;top:738px" width="12" height="12" viewBox="0 0 12 12"><path d="M0.9 0.9l9.3 9.3M10.2 0.9L0.9 10.2" fill="none" stroke="#f4807f" stroke-width="1.4"/></svg><svg class="ic" style="left:1126px;top:738px" width="16" height="12" viewBox="0 0 16 12"><path d="M1.2 5.6l4.2 4.2L14.2 1" fill="none" stroke="#0b7a12" stroke-width="1.9"/></svg><svg class="ic" style="left:1283px;top:738px" width="12" height="12" viewBox="0 0 12 12"><path d="M0.9 0.9l9.3 9.3M10.2 0.9L0.9 10.2" fill="none" stroke="#f4807f" stroke-width="1.4"/></svg><svg class="ic" style="left:1454px;top:738px" width="16" height="12" viewBox="0 0 16 12"><path d="M1.2 5.6l4.2 4.2L14.2 1" fill="none" stroke="#0b7a12" stroke-width="1.9"/></svg><svg class="ic" style="left:315px;top:735px" width="13" height="16" viewBox="0 0 13 16"><path d="M1.6 0.4H8.3V4.4H12.3V14.3A1.4 1.4 0 0 1 10.9 15.7H1.8A1.4 1.4 0 0 1 0.4 14.3V1.6A1.2 1.2 0 0 1 1.6 0.4z" fill="#a6a8ec"/><path d="M9.1 0.5L12.2 3.6H9.1z" fill="#2a30d8"/><rect x="2.6" y="7.3" width="7.6" height="5.8" fill="#2a30d8"/><g fill="#dfe2fb"><rect x="3.6" y="9.4" width="1.3" height="2.7"/><rect x="5.75" y="9.4" width="1.3" height="2.7"/><rect x="7.9" y="9.4" width="1.3" height="2.7"/></g></svg><div class="cell" style="left:334px;top:737px;color:#3843cf">Test closing form</div><div class="abs" style="left:0;top:715px;width:1505px;height:9px;background:linear-gradient(rgba(230,235,253,0),rgba(230,235,253,0.6))"></div><div class="abs" style="left:0;top:724px;width:1505px;height:1px;background:#e3e6f3"></div><svg class="ic" style="left:207px;top:731px" width="30" height="27" viewBox="0 0 30 27"><path d="M7.5 0.5h15L29.5 13.5 22.5 26.5h-15L0.5 13.5z" fill="#e1e5fb"/></svg><svg class="ic" style="left:239px;top:731px" width="30" height="27" viewBox="0 0 30 27"><path d="M7.5 0.5h15L29.5 13.5 22.5 26.5h-15L0.5 13.5z" fill="#e1e5fb"/></svg><svg class="ic" style="left:272px;top:731px" width="30" height="27" viewBox="0 0 30 27"><path d="M7.5 0.5h15L29.5 13.5 22.5 26.5h-15L0.5 13.5z" fill="#e1e5fb"/></svg><svg class="ic" style="left:214px;top:738px" width="16" height="12" viewBox="0 0 16 12"><path d="M0.6 6C2.8 2.3 5.3 0.6 8 0.6s5.2 1.7 7.4 5.4C13.2 9.7 10.7 11.4 8 11.4S2.8 9.7 0.6 6z" fill="#a2a9ef"/><circle cx="8" cy="6" r="2.9" fill="#eef0fd"/><circle cx="8" cy="6.1" r="2" fill="#2a32d6"/><circle cx="7.1" cy="5.2" r="0.9" fill="#eef0fd"/></svg><svg class="ic" style="left:247px;top:738px" width="14" height="13" viewBox="0 0 14 13"><path d="M6 2H2.5A1.5 1.5 0 0 0 1 3.5v7.5A1.5 1.5 0 0 0 2.5 12.5h7.5a1.5 1.5 0 0 0 1.5-1.5V7.5" fill="none" stroke="#3843cf" stroke-width="1.3"/><path d="M11 1l2 2-6.5 6.5H4.5V7.5z" fill="none" stroke="#3843cf" stroke-width="1.3"/></svg><svg class="ic" style="left:280px;top:737px" width="13" height="14" viewBox="0 0 13 14"><path d="M1.2 3.6h10.8M4.2 3.4V1.3h4.6v2.1M2.2 3.8l0.6 8.4a1 1 0 0 0 1 0.9h5.4a1 1 0 0 0 1-0.9l0.6-8.4" fill="none" stroke="#3843cf" stroke-width="1.2"/><path d="M4.1 5.5v6M6.5 5.5v6M8.9 5.5v6" stroke="#3843cf" stroke-width="0.8"/></svg><div class="abs" style="left:1505px;top:85px;width:11px;height:690px;background:#e6ebfd"></div><svg class="ic" style="left:1507px;top:91px" width="7" height="4" viewBox="0 0 7 4"><path d="M0 4L3.5 0 7 4z" fill="#b0b4bf"/></svg><svg class="ic" style="left:1507px;top:755px" width="7" height="4" viewBox="0 0 7 4"><path d="M0 0h7L3.5 4z" fill="#b0b4bf"/></svg><div class="abs" style="left:0;top:764px;width:1517px;height:12px;background:#e6ebfd;border-bottom:1px solid #dfe1e8"></div><div class="abs" style="left:15px;top:767px;width:1266px;height:6px;border-radius:3px;background:#b4bbc9"></div><svg class="ic" style="left:3px;top:766px" width="4" height="8" viewBox="0 0 4 8"><path d="M4 0v8L0 4z" fill="#b0b4bf"/></svg><svg class="ic" style="left:1496px;top:766px" width="4" height="8" viewBox="0 0 4 8"><path d="M0 0v8l4-4z" fill="#b0b4bf"/></svg><svg class="ic" style="left:17px;top:793px" width="9" height="10" viewBox="0 0 9 10"><rect x="0" y="0.5" width="1.6" height="9" fill="#666"/><path d="M9 0.5v9L2 5z" fill="#666"/></svg><svg class="ic" style="left:50px;top:793px" width="7" height="10" viewBox="0 0 7 10"><path d="M7 0.5v9L0 5z" fill="#666"/></svg><div class="abs" style="left:68px;top:783px;width:31px;height:31px;background:#ced2f1"></div><div class="ft" style="left:68px;top:791px;width:31px;text-align:center;color:#3843cf">1</div><svg class="ic" style="left:111px;top:793px" width="7" height="10" viewBox="0 0 7 10"><path d="M0 0.5v9L7 5z" fill="#666"/></svg><svg class="ic" style="left:140px;top:793px" width="9" height="10" viewBox="0 0 9 10"><path d="M0 0.5v9L7 5z" fill="#666"/><rect x="7.4" y="0.5" width="1.6" height="9" fill="#666"/></svg><div class="ft" style="left:174px;top:791px">Page</div><div class="abs" style="left:211px;top:783px;width:65px;height:31px;border:1px solid #e3e8fb;border-radius:5px;background:#f6f7fb"></div><div class="ft" style="left:223px;top:791px">1</div><div class="ft" style="left:283px;top:791px">of 1</div><div class="abs" style="left:317px;top:783px;width:65px;height:31px;border:1px solid #e3e8fb;border-radius:5px;background:#f6f7fb;overflow:hidden"><div style="position:absolute;left:36px;top:0;width:29px;height:31px;background:#e6ebfd"></div></div><div class="ft" style="left:327px;top:791px">20</div><svg class="ic" style="left:364px;top:795px" width="8" height="7" viewBox="0 0 8 7"><path d="M0 0h8L4 6.5z" fill="#2b36d4"/></svg><div class="ft" style="left:389px;top:791px">items per page</div><div class="ft" style="left:1369px;top:791px">1 - 17 of 17 items</div><svg class="ic" style="left:1487px;top:789px" width="16" height="18" viewBox="0 0 16 18"><path d="M12.8 6.2A6 6 0 1 1 8 4" fill="none" stroke="#1f1f1f" stroke-width="2"/><path d="M7.5 0.8L12 4 7.5 7.2z" fill="#1f1f1f"/></svg></div>
<svg class="ic" style="left:440px;top:780px;overflow:visible" width="120" height="110" viewBox="440 780 120 110">
<defs><filter id="sh" x="-30%" y="-30%" width="160%" height="160%"><feGaussianBlur in="SourceAlpha" stdDeviation="3"/><feOffset dx="2" dy="3"/><feComponentTransfer><feFuncA type="linear" slope="0.45"/></feComponentTransfer><feMerge><feMergeNode/><feMergeNode in="SourceGraphic"/></feMerge></filter></defs>
<path filter="url(#sh)" d="M461.5 798.3L463.6 796.6 527.2 853.4 529.8 847.5 540 873.6 513 864.8 518.8 862.2z" fill="#93d543"/></svg>
<div class="abs" style="left:1857px;top:0;width:15px;height:966px;background:#fcfcfc"></div>
<svg class="ic" style="left:1860px;top:10px" width="9" height="5" viewBox="0 0 9 5"><path d="M0 5L4.5 0 9 5z" fill="#8b8b8b"/></svg>
<div class="abs" style="left:1860px;top:103px;width:9px;height:840px;border-radius:4.5px;background:#8b8b8b"></div>
<svg class="ic" style="left:1860px;top:951px" width="9" height="5" viewBox="0 0 9 5"><path d="M0 0h9L4.5 5z" fill="#8b8b8b"/></svg>
</div></body></html>
